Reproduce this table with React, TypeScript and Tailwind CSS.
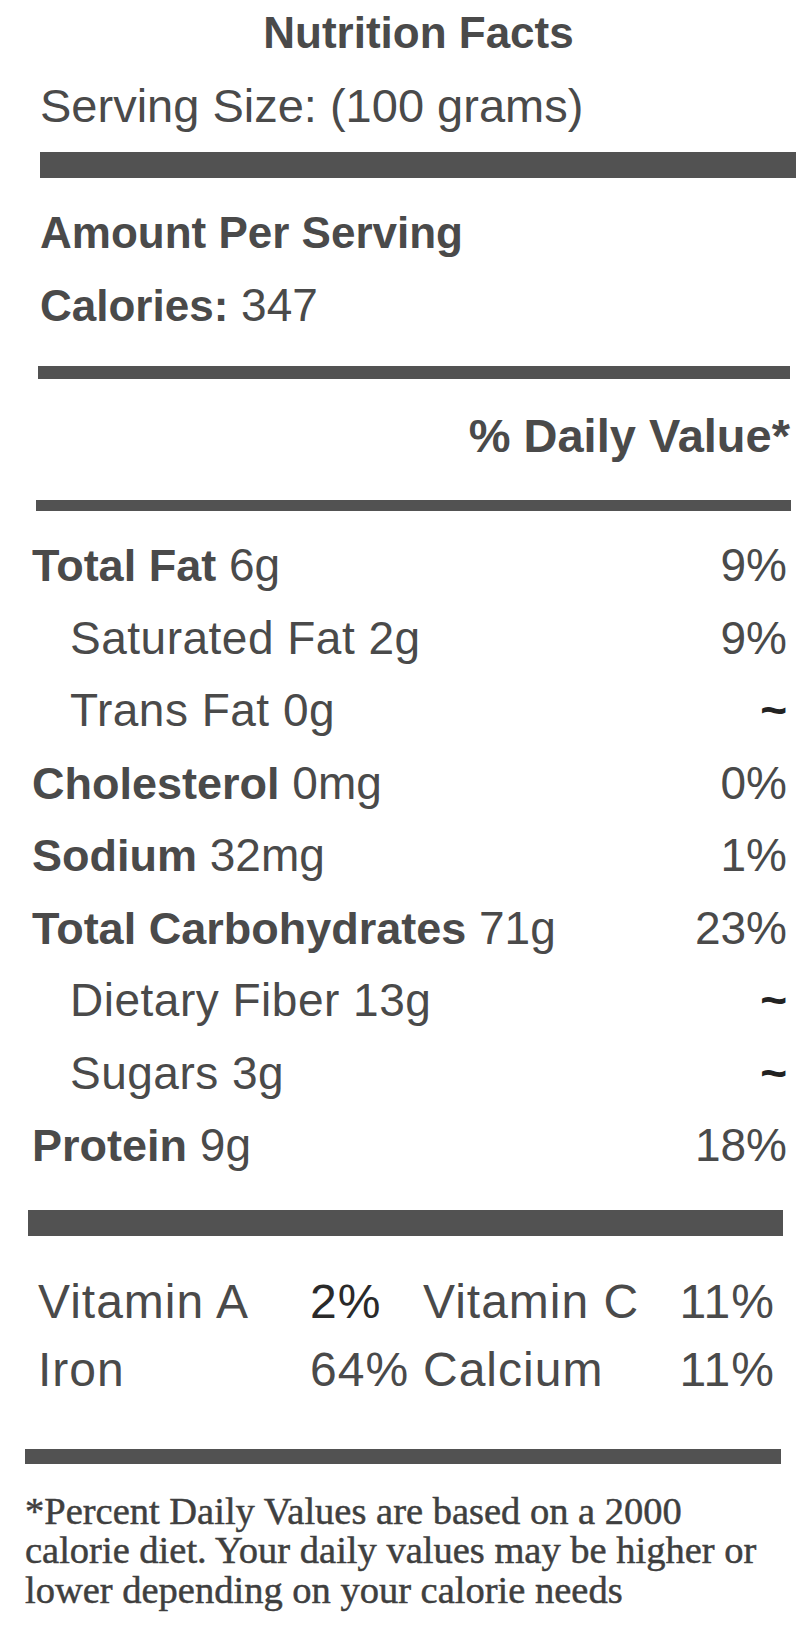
const rows = [
  { name: 'Total Fat', amount: '6g', dv: '9%', bold: true },
  { name: 'Saturated Fat', amount: '2g', dv: '9%', sub: true },
  { name: 'Trans Fat', amount: '0g', dv: '~', sub: true },
  { name: 'Cholesterol', amount: '0mg', dv: '0%', bold: true },
  { name: 'Sodium', amount: '32mg', dv: '1%', bold: true },
  { name: 'Total Carbohydrates', amount: '71g', dv: '23%', bold: true },
  { name: 'Dietary Fiber', amount: '13g', dv: '~', sub: true },
  { name: 'Sugars', amount: '3g', dv: '~', sub: true },
  { name: 'Protein', amount: '9g', dv: '18%', bold: true },
]

function NutrientRow({ name, amount, dv, bold, sub }: (typeof rows)[number]) {
  return (
    <div className="flex h-[72.5px] items-baseline justify-between leading-[72.5px]">
      <span className={sub ? 'pl-[38px] tracking-[0.5px]' : ''}>
        <span className={bold ? 'text-[45px] font-bold' : ''}>{name}</span> {amount}
      </span>
      {dv === '~' ? (
        <span className="font-bold text-[#222]">~</span>
      ) : (
        <span>{dv}</span>
      )}
    </div>
  )
}

export default function App() {
  return (
    <div className="min-h-screen bg-white pt-[3px] font-['Liberation_Sans',Arial,sans-serif] text-[#4a4a4a]">
      <h1 className="h-[60px] pl-[37px] text-center text-[44px] font-bold leading-[60px]">
        Nutrition Facts
      </h1>
      <div className="mt-[13px] h-[60px] pl-[40px] text-[47px] leading-[60px]">
        Serving Size: (100 grams)
      </div>

      <div className="mt-[16px] ml-[40px] h-[26px] w-[756px] bg-[#525252]" />

      <div className="mt-[25px] h-[60px] pl-[40px] text-[44px] font-bold leading-[60px]">
        Amount Per Serving
      </div>
      <div className="mt-[12px] h-[60px] pl-[40px] text-[46px] leading-[60px]">
        <span className="text-[44px] font-bold">Calories:</span> 347
      </div>

      <div className="mt-[31px] ml-[38px] h-[13px] w-[752px] bg-[#525252]" />

      <div className="mt-[27px] h-[60px] pr-[10px] text-right text-[47px] font-bold leading-[60px]">
        % Daily Value*
      </div>

      <div className="mt-[34px] ml-[36px] h-[11px] w-[755px] bg-[#525252]" />

      <div className="mt-[18px] mr-[13px] ml-[32px] text-[46px]">
        {rows.map((row) => (
          <NutrientRow key={row.name} {...row} />
        ))}
      </div>

      <div className="mt-[28px] ml-[28px] h-[26px] w-[755px] bg-[#525252]" />

      <div className="mt-[32px] ml-[38px] grid w-[737px] grid-cols-[272px_113px_1fr_auto] text-[48px] leading-[68px] tracking-[1px]">
        <span>Vitamin A</span>
        <span className="text-[#2a2a2a]">2%</span>
        <span>Vitamin C</span>
        <span className="text-right">11%</span>
        <span>Iron</span>
        <span>64%</span>
        <span>Calcium</span>
        <span className="text-right">11%</span>
      </div>

      <div className="mt-[45px] ml-[25px] h-[15px] w-[756px] bg-[#525252]" />

      <p className="mt-[28px] ml-[25px] font-['Liberation_Serif','Times_New_Roman',serif] text-[38.5px] leading-[39.5px] whitespace-nowrap text-[#3f3f3f] [-webkit-text-stroke:0.5px_#3f3f3f]">
        *Percent Daily Values are based on a 2000
        <br />
        calorie diet. Your daily values may be higher or
        <br />
        lower depending on your calorie needs
      </p>
    </div>
  )
}
